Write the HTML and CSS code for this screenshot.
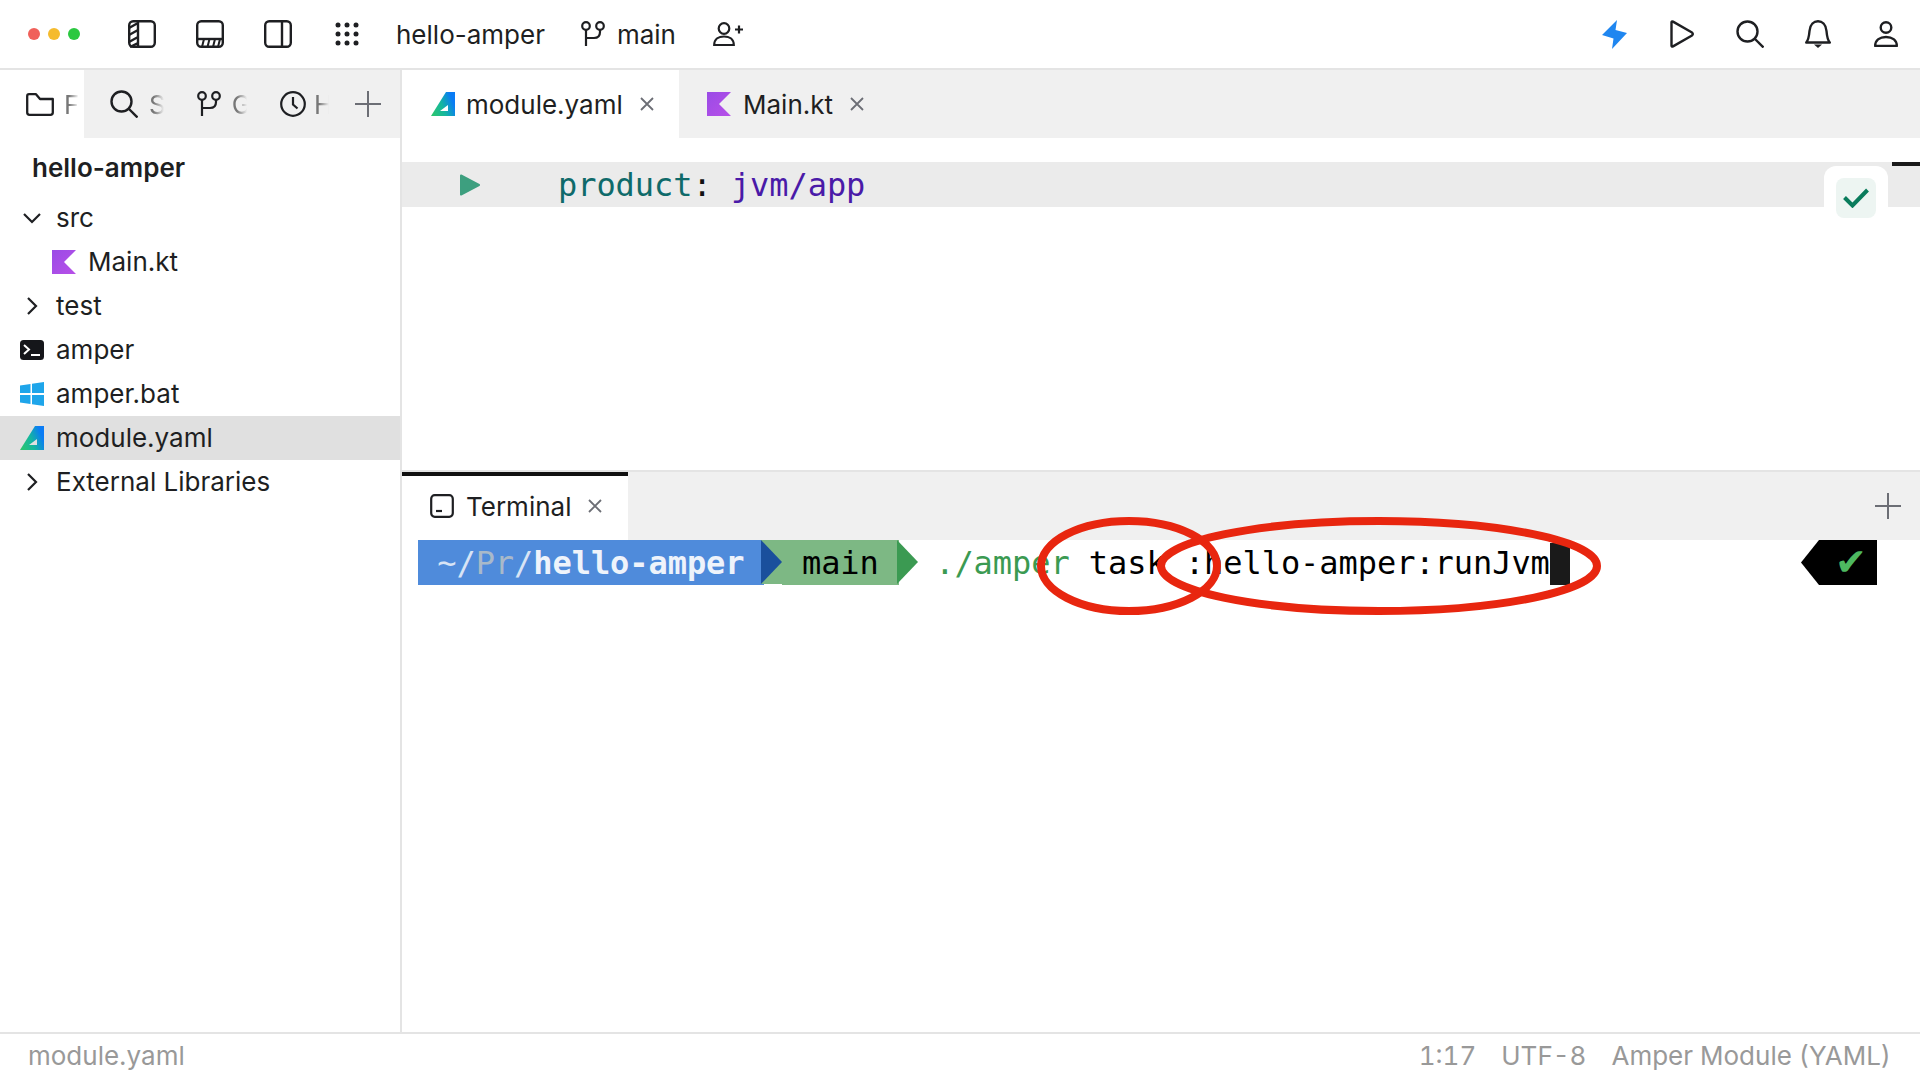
FILE: index.html
```html
<!DOCTYPE html>
<html lang="en">
<head>
<meta charset="utf-8">
<title>hello-amper</title>
<link rel="stylesheet" href="styles.css">
</head>
<body>
<svg class="defs" width="0" height="0" aria-hidden="true">
  <defs>
    <linearGradient id="amp" x1="0" y1="1" x2="1" y2="0.6">
      <stop offset="0" stop-color="#2fc768"/>
      <stop offset="0.55" stop-color="#14b6a0"/>
      <stop offset="1" stop-color="#0a7cf5"/>
    </linearGradient>
    <linearGradient id="kot" x1="0" y1="0" x2="1" y2="1">
      <stop offset="0" stop-color="#9a4be6"/>
      <stop offset="1" stop-color="#b850e8"/>
    </linearGradient>
    <symbol id="i-amper" viewBox="0 0 24 24"><path fill="url(#amp)" fill-rule="evenodd" d="M15 0H24V24H0ZM17 13 9 19H17Z"/></symbol>
    <symbol id="i-kotlin" viewBox="0 0 24 24"><path fill="url(#kot)" d="M0 0H24L12 12 24 24H0Z"/></symbol>
    <symbol id="i-branch" viewBox="0 0 24 26"><g fill="none" stroke="#1e1f22" stroke-width="2.2"><circle cx="5" cy="5" r="3.8"/><circle cx="19" cy="5" r="3.8"/><path d="M5 9V25M5 17H13Q19 17 19 11V9"/></g></symbol>
    <symbol id="i-x" viewBox="0 0 16 16"><path fill="none" stroke="#6c6e75" stroke-width="1.8" d="M2 2 14 14M14 2 2 14"/></symbol>
    <symbol id="i-plus" viewBox="0 0 26 26"><path fill="none" stroke="#6c6e75" stroke-width="2" d="M13 0V26M0 13H26"/></symbol>
    <symbol id="i-right" viewBox="0 0 12 20"><path fill="none" stroke="#1e1f22" stroke-width="2.2" d="M2 2 10 10 2 18"/></symbol>
    <symbol id="i-search" viewBox="0 0 28 28"><g fill="none" stroke="#1e1f22" stroke-width="2.4"><circle cx="11.5" cy="11.5" r="10"/><path d="M18.5 18.5 27.5 27.5"/></g></symbol>
  </defs>
</svg>
<div class="app">
  <header class="titlebar">
    <div class="dots"><span class="dot red"></span><span class="dot yellow"></span><span class="dot lime"></span></div>
    <div class="tools">
      <svg class="ic28" viewBox="0 0 28 28"><g fill="none" stroke="#1e1f22" stroke-width="2.4"><rect x="1.2" y="1.2" width="25.6" height="25.6" rx="4"/><path d="M10 1V27M1 8 10 3M1 15 10 10M1 22 10 17M2 27 10 23"/></g></svg>
      <svg class="ic28" viewBox="0 0 28 28"><g fill="none" stroke="#1e1f22" stroke-width="2.4"><rect x="1.2" y="1.2" width="25.6" height="25.6" rx="4"/><path d="M1 19H27"/><path stroke-width="2" d="M6 27 8 19M11.5 27 13.5 19M17 27 19 19M22 27 24 19"/></g></svg>
      <svg class="ic28" viewBox="0 0 28 28"><g fill="none" stroke="#1e1f22" stroke-width="2.4"><rect x="1.2" y="1.2" width="25.6" height="25.6" rx="4"/><path d="M18 1V27"/></g></svg>
      <svg class="ic24" viewBox="0 0 24 24" fill="#1e1f22"><circle cx="3" cy="3" r="2.5"/><circle cx="12" cy="3" r="2.5"/><circle cx="21" cy="3" r="2.5"/><circle cx="3" cy="12" r="2.5"/><circle cx="12" cy="12" r="2.5"/><circle cx="21" cy="12" r="2.5"/><circle cx="3" cy="21" r="2.5"/><circle cx="12" cy="21" r="2.5"/><circle cx="21" cy="21" r="2.5"/></svg>
    </div>
    <span class="project">hello-amper</span>
    <span class="branch"><svg class="ic-branch"><use href="#i-branch"/></svg>main</span>
    <svg class="addperson" viewBox="0 0 30 24"><g fill="none" stroke="#1e1f22" stroke-width="2.2"><circle cx="11" cy="6.5" r="5.3"/><path d="M1.2 23C1.2 17 6 14.5 11 14.5S20.8 17 20.8 23Z"/><path d="M22 7.5H30M26 3.5V11.5"/></g></svg>
    <div class="actions">
      <svg class="ic-bolt" viewBox="0 0 25 29"><path fill="#1f86f0" d="M15 0 13.5 10 25 13 10 29 11.5 18.5 0 15Z"/></svg>
      <svg class="ic-play" viewBox="0 0 24 28"><path fill="none" stroke="#1e1f22" stroke-width="2.4" stroke-linejoin="round" d="M1.5 2.5Q1.5 1 3 1.6L22 12.5Q23.5 14 22 15.5L3 26.4Q1.5 27 1.5 25.5Z"/></svg>
      <svg class="ic-search"><use href="#i-search"/></svg>
      <svg class="ic-bell" viewBox="0 0 26 28"><g fill="none" stroke="#1e1f22" stroke-width="2.4" stroke-linejoin="round"><path d="M1.2 22.5C3.5 20 4 17 4.5 11 5 4 9 1.2 13 1.2S21 4 21.5 11C22 17 22.5 20 24.8 22.5Z"/></g><path fill="#1e1f22" d="M9 24.5H17L13 28Z"/></svg>
      <svg class="ic-user" viewBox="0 0 24 26"><g fill="none" stroke="#1e1f22" stroke-width="2.4" stroke-linejoin="round"><circle cx="12" cy="6.5" r="5.3"/><path d="M1.2 25C1.2 19 6 16 12 16S22.8 19 22.8 25Z"/></g></svg>
    </div>
  </header>

  <div class="workspace">
    <aside class="sidebar">
      <nav class="side-tabs">
        <div class="side-tab first">
          <svg class="ic-folder" viewBox="0 0 28 23"><path fill="none" stroke="#1e1f22" stroke-width="2.3" stroke-linejoin="round" d="M1.2 3Q1.2 1.2 3 1.2H10L14 6H26.8V19.5Q26.8 21.8 24.5 21.8H3.5Q1.2 21.8 1.2 19.5Z"/></svg>
          <span class="fade f1">F</span>
        </div>
        <div class="side-rest">
          <div class="side-tab s2"><svg class="ic-search"><use href="#i-search"/></svg><span class="fade f2">S</span></div>
          <div class="side-tab s3"><svg class="ic-branch"><use href="#i-branch"/></svg><span class="fade f3">G</span></div>
          <div class="side-tab s4"><svg class="ic-clock" viewBox="0 0 26 26"><g fill="none" stroke="#1e1f22" stroke-width="2.2"><circle cx="13" cy="13" r="11.8"/><path d="M13 6V13.5L17.5 17.5"/></g></svg><span class="fade f4">H</span></div>
          <svg class="ic-plus side-plus"><use href="#i-plus"/></svg>
        </div>
      </nav>
      <h1 class="tree-title">hello-amper</h1>
      <ul class="tree">
        <li class="row"><span class="slot"><svg class="chev down" viewBox="0 0 20 12"><path fill="none" stroke="#1e1f22" stroke-width="2.2" d="M2 2 10 10 18 2"/></svg></span>src</li>
        <li class="row nested"><svg class="ic24 file"><use href="#i-kotlin"/></svg>Main.kt</li>
        <li class="row"><span class="slot"><svg class="chev right"><use href="#i-right"/></svg></span>test</li>
        <li class="row"><span class="slot"><svg class="ic24" viewBox="0 0 24 20"><rect width="24" height="20" rx="3.5" fill="#15161a"/><path fill="none" stroke="#fff" stroke-width="2" d="M4 5 9 9.5 4 14M11 15H20"/></svg></span>amper</li>
        <li class="row"><span class="slot"><svg class="ic24" viewBox="0 0 24 24"><path fill="#1ea5ea" d="M0 3.5 10.5 2V11H0ZM12 1.8 24 0V11H12ZM0 13H10.5V22L0 20.5ZM12 13H24V24L12 22.2Z"/></svg></span>amper.bat</li>
        <li class="row selected"><span class="slot"><svg class="ic24"><use href="#i-amper"/></svg></span>module.yaml</li>
        <li class="row"><span class="slot"><svg class="chev right"><use href="#i-right"/></svg></span>External Libraries</li>
      </ul>
    </aside>

    <main class="content">
      <div class="editor-tabs">
        <div class="etab active"><svg class="ic24"><use href="#i-amper"/></svg><span>module.yaml</span><svg class="ic-x"><use href="#i-x"/></svg></div>
        <div class="etab second"><svg class="ic24"><use href="#i-kotlin"/></svg><span>Main.kt</span><svg class="ic-x"><use href="#i-x"/></svg></div>
      </div>
      <section class="editor">
        <div class="code-line">
          <svg class="ic-run" viewBox="0 0 20 22"><path fill="#3d9f7f" stroke="#3d9f7f" stroke-width="2" stroke-linejoin="round" d="M1 1.5 19 11 1 20.5Z"/></svg>
          <code class="code"><span class="key">product</span>: <span class="val">jvm/app</span></code>
        </div>
        <div class="scroll-mark"></div>
        <div class="check-pop"><div class="check-box"><svg class="ic-check" viewBox="0 0 26 20"><path fill="none" stroke="#0a7c5c" stroke-width="4" d="M1.5 9.5 9.5 17.5 24.5 2"/></svg></div></div>
      </section>
      <section class="terminal">
        <div class="term-tabs">
          <div class="ttab"><svg class="ic-term" viewBox="0 0 24 24"><rect x="1.2" y="1.2" width="21.6" height="21.6" rx="3.5" fill="none" stroke="#1e1f22" stroke-width="2.2"/><path stroke="#1e1f22" stroke-width="2.2" d="M6 17H12"/></svg><span>Terminal</span><svg class="ic-x"><use href="#i-x"/></svg></div>
          <svg class="ic-plus term-plus"><use href="#i-plus"/></svg>
        </div>
        <div class="prompt">
          <span class="seg path"> ~/<span class="dim">Pr</span>/<b>hello-amper</b> </span><span class="arrow a-blue"></span><span class="seg git"> main </span><span class="arrow a-green"></span><span class="cmd"> <span class="cmd-green">./amper</span> task :hello-amper:runJvm</span><span class="cursor"></span>
          <span class="status-pill"><span class="pill-check">✔</span></span>
        </div>
        <svg class="marks" viewBox="0 0 590 104" aria-hidden="true"><g fill="none" stroke="#e8260f" stroke-width="8"><ellipse cx="99" cy="52" rx="88" ry="45"/><ellipse cx="349" cy="52" rx="218" ry="45"/></g></svg>
      </section>
    </main>
  </div>

  <footer class="statusbar">
    <span>module.yaml</span>
    <div class="status-right"><span>1:17</span><span>UTF-8</span><span>Amper Module (YAML)</span></div>
  </footer>
</div>
</body>
</html>
```

FILE: styles.css
```css
* { box-sizing: border-box; }
html, body { margin: 0; height: 100%; background: #fff; }
body { font-family: Inter, "Liberation Sans", sans-serif; font-size: 26px; color: #1e1f22; overflow: hidden; }
svg { display: block; flex: none; }
.defs { position: absolute; }
.app { display: flex; flex-direction: column; height: 1080px; }

.titlebar { display: flex; align-items: center; height: 70px; flex: none; border-bottom: 2px solid #e4e4e4; padding-left: 28px; }
.dots { display: flex; gap: 8px; }
.dot { width: 12px; height: 12px; border-radius: 50%; }
.red { background: #f0605a; }
.yellow { background: #f5bb2e; }
.lime { background: #2bc840; }
.tools { display: flex; align-items: center; gap: 40px; margin-left: 48px; }
.ic28 { width: 28px; height: 28px; }
.ic24 { width: 24px; height: 24px; }
.tools .ic24 { margin-left: 3px; }
.project { margin-left: 37px; }
.branch { display: flex; align-items: center; gap: 12px; margin-left: 36px; }
.ic-branch { width: 24px; height: 26px; }
.addperson { width: 30px; height: 24px; margin-left: 37px; }
.actions { display: flex; align-items: center; margin-left: auto; padding-right: 22px; }
.ic-bolt { width: 25px; height: 29px; }
.ic-play { width: 24px; height: 28px; margin-left: 43px; }
.ic-search { width: 28px; height: 28px; }
.actions .ic-search { margin-left: 42px; }
.ic-bell { width: 26px; height: 28px; margin-left: 41px; }
.ic-user { width: 24px; height: 26px; margin-left: 43px; }

.workspace { display: flex; flex: 1; min-height: 0; }
.sidebar { width: 402px; flex: none; border-right: 2px solid #e4e4e4; }
.side-tabs { display: flex; height: 68px; }
.side-tab { display: flex; align-items: center; }
.side-tab.first { width: 84px; padding-left: 26px; }
.ic-folder { width: 28px; height: 23px; }
.side-rest { display: flex; align-items: center; flex: 1; background: #f0f0f0; padding-left: 26px; }
.fade { display: block; white-space: nowrap; color: #777; font-size: 26px; -webkit-mask-image: linear-gradient(to right, #000 5px, transparent 15px); mask-image: linear-gradient(to right, #000 5px, transparent 15px); }
.f1 { margin-left: 10px; }
.f2 { margin-left: 11px; }
.f3 { margin-left: 11px; }
.f4 { margin-left: 8px; }
.s3 { margin-left: 31px; }
.s4 { margin-left: 29px; }
.ic-clock { width: 26px; height: 26px; }
.ic-plus { width: 26px; height: 26px; }
.side-plus { margin-left: 22px; }

.tree-title { margin: 0; height: 58px; padding: 13px 0 0 32px; font-size: 26px; font-weight: 600; line-height: 34px; color: #1e1f22; }
.tree { list-style: none; margin: 0; padding: 0; }
.row { display: flex; align-items: center; height: 44px; padding: 0 0 1px 20px; }
.slot { display: flex; align-items: center; justify-content: center; width: 24px; height: 24px; margin-right: 12px; }
.nested { padding-left: 52px; }
.file { margin-right: 12px; }
.chev.down { width: 20px; height: 12px; }
.chev.right { width: 12px; height: 20px; }
.selected { background: #e0e0e0; }

.content { display: flex; flex-direction: column; flex: 1; min-width: 0; }
.editor-tabs { display: flex; height: 68px; flex: none; background: #f0f0f0; }
.etab { display: flex; align-items: center; padding-left: 29px; }
.etab span { margin-left: 11px; }
.etab .ic-x { margin-left: 16px; }
.ic-x { width: 16px; height: 16px; }
.etab.active { width: 277px; background: #fff; }
.etab.second { padding-left: 28px; }
.etab.second span { margin-left: 12px; }
.editor { position: relative; flex: none; height: 332px; padding-top: 24px; }
.code-line { display: flex; align-items: center; height: 45px; background: #ebebeb; padding-left: 58px; }
.ic-run { width: 20px; height: 22px; }
.code { margin-left: 78px; font-family: "DejaVu Sans Mono", "Liberation Mono", monospace; font-size: 32px; letter-spacing: -0.06px; color: #111; white-space: pre; }
.key { color: #0f6a6a; }
.val { color: #4a1aa8; }
.scroll-mark { position: absolute; right: 0; top: 24px; width: 28px; height: 4px; background: #1a1a1a; }
.check-pop { position: absolute; right: 32px; top: 28px; width: 64px; height: 60px; padding: 12px; background: #fff; border-radius: 12px; }
.check-box { display: flex; align-items: center; justify-content: center; width: 40px; height: 40px; background: #edf5f2; border-radius: 8px; }
.ic-check { width: 26px; height: 20px; }

.terminal { position: relative; flex: 1; border-top: 2px solid #e4e4e4; }
.term-tabs { display: flex; align-items: center; height: 68px; background: #f0f0f0; padding-right: 19px; }
.ttab { display: flex; align-items: center; align-self: stretch; width: 226px; padding: 0 0 4px 28px; background: #fff; border-top: 4px solid #111; }
.ttab span { margin-left: 12px; }
.ttab .ic-x { margin-left: 16px; }
.ic-term { width: 24px; height: 24px; }
.term-plus { margin-left: auto; }
.prompt { display: flex; align-items: stretch; height: 45px; margin-left: 16px; font-family: "DejaVu Sans Mono", "Liberation Mono", monospace; font-size: 32px; line-height: 47px; white-space: pre; letter-spacing: -0.06px; color: #000; }
.seg { display: block; }
.path { background: #4f8bdb; color: #d8e4f5; }
.path b { color: #eef3fb; }
.dim { color: #a9b9c9; }
.git { background: #7db884; color: #000; padding: 0 1px; }
.arrow { width: 0; height: 0; border-top: 22.5px solid transparent; border-bottom: 22.5px solid transparent; border-left: 21px solid; }
.a-blue { border-left-color: #1a4f9c; background: #7db884; margin-left: -3px; }
.a-green { border-left-color: #3b9a52; margin-left: -2px; }
.cmd { margin-left: -2px; }
.cmd-green { color: #3b9a52; }
.cursor { width: 20px; margin-top: 3px; background: #1a1a1a; }
.status-pill { width: 76px; margin-left: auto; margin-right: 43px; background: #000; clip-path: polygon(0 50%, 18px 0, 100% 0, 100% 100%, 18px 100%); display: flex; align-items: center; justify-content: center; padding-left: 24px; }
.pill-check { color: #4db860; font-family: "DejaVu Sans", sans-serif; font-size: 38px; line-height: 45px; }
.marks { position: absolute; left: 628px; top: 42px; width: 590px; height: 104px; }

.statusbar { display: flex; align-items: center; justify-content: space-between; height: 48px; flex: none; border-top: 2px solid #e4e4e4; padding: 0 29px 4px 28px; color: #999; }
.status-right { display: flex; gap: 25px; font-variant-numeric: tabular-nums; }
```
